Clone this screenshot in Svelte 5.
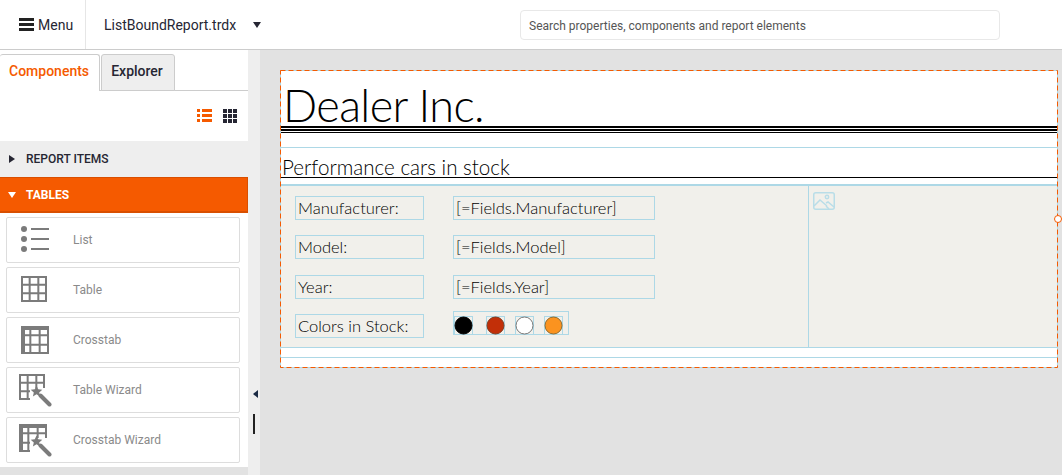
<script lang="ts">
	const items = ['List', 'Table', 'Crosstab', 'Table Wizard', 'Crosstab Wizard'];

	const fields = [
		{ label: 'Manufacturer:', value: '[=Fields.Manufacturer]' },
		{ label: 'Model:', value: '[=Fields.Model]' },
		{ label: 'Year:', value: '[=Fields.Year]' }
	];

	const swatches = [
		{ fill: '#000', stroke: '#000' },
		{ fill: '#c22f08', stroke: '#7a3a20' },
		{ fill: '#fff', stroke: '#777' },
		{ fill: '#fb931f', stroke: '#8a6a30' }
	];
</script>

{#snippet grid(x: number, y: number, w: number, h: number, heavy: boolean)}
	<g fill="none" stroke="#7b7b7b" stroke-width="2">
		<rect x={x + 1} y={y + 1} width={w - 2} height={h - 2} />
		<path d="M{x + w / 3} {y}V{y + h}M{x + (2 * w) / 3} {y}V{y + h}M{x} {y + h / 3}H{x + w}M{x} {y + (2 * h) / 3}H{x + w}" />
	</g>
	{#if heavy}
		<path d="M{x} {y}h{w}v4h-{w}zM{x} {y}h4v{h}h-4z" fill="#7b7b7b" />
	{/if}
{/snippet}

{#snippet wand()}
	<path d="M23 15h22v18H23z" fill="#fff" />
	<path d="M29.500 12.500l1.700 3.800 4.100.400-3.100 2.700.900 4-3.600-2.100-3.600 2.100.900-4-3.100-2.700 4.100-.400z" fill="#7b7b7b" />
	<path d="M33.500 22.500l9 9" stroke="#7b7b7b" stroke-width="4" stroke-linecap="round" />
{/snippet}

<div class="app">
	<header>
		<button class="menu">
			<svg width="15" height="13" viewBox="0 0 15 13"><path d="M0 0h15v3H0zM0 5h15v3H0zM0 10h15v3H0z" fill="#222" /></svg>
			Menu
		</button>
		<div class="file">
			<span>ListBoundReport.trdx</span>
			<i class="caret"></i>
		</div>
		<input class="search" placeholder="Search properties, components and report elements" />
	</header>

	<div class="main">
		<aside>
			<nav class="tabs">
				<div class="tab active">Components</div>
				<div class="tab">Explorer</div>
			</nav>
			<div class="views">
				<svg width="15" height="14" viewBox="0 0 15 14"><path d="M0 0h3v3H0zM5 0h10v3H5zM0 5h3v3H0zM5 5h10v3H5zM0 10h3v3H0zM5 10h10v3H5z" fill="#f55a00" /></svg>
				<svg width="14" height="14" viewBox="0 0 14 14"><path d="M0 0h4v4H0zM5 0h4v4H5zM10 0h4v4h-4zM0 5h4v4H0zM5 5h4v4H5zM10 5h4v4h-4zM0 10h4v4H0zM5 10h4v4H5zM10 10h4v4h-4z" fill="#262633" /></svg>
			</div>
			<div class="group"><i class="tri-right"></i>REPORT ITEMS</div>
			<div class="group open"><i class="tri-down"></i>TABLES</div>
			<ul>
				{#each items as name, i}
					<li>
						<svg class="icon" width="48" height="34" viewBox="0 0 48 34">
							{#if i === 0}
								<g fill="#7b7b7b">
									<circle cx="17" cy="6" r="3" /><circle cx="17" cy="16" r="3" /><circle cx="17" cy="26" r="3" />
									<path d="M24 5h18v2H24zM24 15h18v2H24zM24 25h18v2H24z" />
								</g>
							{:else if i === 1}
								{@render grid(14, 3, 26, 26, false)}
							{:else if i === 2}
								{@render grid(14, 3, 28, 28, true)}
							{:else if i === 3}
								{@render grid(12, 1, 26, 26, false)}
								{@render wand()}
							{:else}
								{@render grid(12, 1, 28, 28, true)}
								{@render wand()}
							{/if}
						</svg>
						<span>{name}</span>
					</li>
				{/each}
			</ul>
		</aside>

		<div class="gutter">
			<i class="tri-left"></i>
			<i class="bar"></i>
		</div>

		<main>
			<section class="report">
				<div class="band title-band">
					<h1>Dealer Inc.</h1>
				</div>
				<div class="rule"></div>
				<div class="band sub-band">
					<h2>Performance cars in stock</h2>
				</div>
				<div class="detail">
					<div class="form">
						{#each fields as f}
							<div class="row">
								<div class="box label">{f.label}</div>
								<div class="box value">{f.value}</div>
							</div>
						{/each}
						<div class="row last">
							<div class="box label">Colors in Stock:</div>
							<div class="swatches">
								{#each swatches as s}
									<div class="swatch">
										<svg width="19" height="19" viewBox="0 0 19 19"><circle cx="9.500" cy="9.500" r="8.500" fill={s.fill} stroke={s.stroke} /></svg>
									</div>
								{/each}
							</div>
						</div>
					</div>
					<div class="picture">
						<svg width="22" height="18" viewBox="0 0 22 18" fill="none" stroke="#b9dde8" stroke-width="1.500">
							<rect x=".75" y=".75" width="20.500" height="16.500" rx="2" />
							<circle cx="14" cy="5" r="1.700" />
							<path d="M1 14l6-6 7 6M13 11l2-1 6 5M16 17l-3-3" />
						</svg>
					</div>
				</div>
				<div class="foot"></div>
				<div class="foot short"></div>
				<svg class="dashes" width="778" height="298" viewBox="0 0 778 298">
					<rect x=".5" y=".5" width="777" height="297" />
				</svg>
				<i class="handle"></i>
			</section>
		</main>
	</div>
</div>

<style>
	:global(body) {
		margin: 0;
		overflow: hidden;
	}

	.app {
		width: 1062px;
		height: 475px;
		display: flex;
		flex-direction: column;
		font-family: Roboto, sans-serif;
		color: #262633;
		background: #e2e2e2;
	}

	header {
		height: 49px;
		flex: none;
		display: flex;
		align-items: center;
		background: #fff;
		border-bottom: 1px solid #ccc;
	}

	.menu {
		width: 86px;
		height: 49px;
		box-sizing: border-box;
		padding: 0 0 0 19px;
		display: flex;
		align-items: center;
		gap: 4px;
		border: 0;
		border-right: 1px solid #e6e6e6;
		background: none;
		font: 14px Roboto, sans-serif;
		color: #262633;
	}

	.file {
		width: 434px;
		box-sizing: border-box;
		padding-left: 18px;
		display: flex;
		align-items: center;
		font-size: 14px;
	}

	.caret {
		margin-left: 17px;
		border: 4px solid transparent;
		border-top: 6px solid #262633;
		border-bottom: 0;
	}

	.search {
		width: 480px;
		height: 30px;
		box-sizing: border-box;
		padding: 2px 8px 0;
		border: 1px solid #e8e8e8;
		border-radius: 4px;
		font: 12px Roboto, sans-serif;
		outline: none;
	}

	.search::placeholder {
		color: #555;
		opacity: 1;
	}

	.main {
		flex: 1;
		display: flex;
		min-height: 0;
	}

	aside {
		width: 248px;
		height: 417px;
		background: #fff;
	}

	.tabs {
		display: flex;
		height: 41px;
		box-sizing: border-box;
		padding-top: 4px;
		border-bottom: 1px solid #ccc;
	}

	.tab {
		height: 37px;
		box-sizing: border-box;
		width: 74px;
		margin-left: 1px;
		padding-right: 2px;
		border: 1px solid #ccc;
		border-radius: 3px 3px 0 0;
		background: #eee;
		font-size: 14px;
		font-weight: 500;
		line-height: 33px;
		text-align: center;
	}

	.tab.active {
		width: 100px;
		margin-left: 0;
		height: 37px;
		border-width: 1px 1px 0 0;
		background: #fff;
		color: #f55a00;
		text-align: left;
		padding: 0 0 0 9px;
	}

	.views {
		height: 50px;
		box-sizing: border-box;
		padding: 18px 11px 0 0;
		display: flex;
		justify-content: flex-end;
		gap: 11px;
	}

	.group {
		height: 36px;
		box-sizing: border-box;
		padding-left: 9px;
		display: flex;
		align-items: center;
		background: #eee;
		font-size: 12px;
		font-weight: 500;
	}

	.group.open {
		background: #f55a00;
		border: 1px solid #d94f00;
		border-width: 1px 1px 2px 0;
		color: #fff;
		font-weight: 700;
	}

	.tri-right {
		margin-right: 11px;
		border: 4px solid transparent;
		border-left: 6px solid #262633;
		border-right: 0;
	}

	.tri-down {
		margin-right: 10px;
		margin-left: -1px;
		border: 4px solid transparent;
		border-top: 6px solid #fff;
		border-bottom: 0;
	}

	ul {
		list-style: none;
		margin: 0;
		padding: 4px 8px 0 6px;
		display: flex;
		flex-direction: column;
		gap: 4px;
	}

	li {
		height: 46px;
		box-sizing: border-box;
		display: flex;
		align-items: center;
		border: 1px solid #ddd;
		border-radius: 2px;
		font-size: 12px;
		color: #8a8a8a;
	}

	.icon {
		margin: 0 18px 0 0;
		flex: none;
	}

	.gutter {
		width: 12px;
		height: 100%;
		flex: none;
		box-sizing: border-box;
		padding: 340px 0 0 5px;
		display: flex;
		flex-direction: column;
		background: #eee;
	}

	.tri-left {
		width: 0;
		border: 4px solid transparent;
		border-right: 5px solid #1a2a44;
		border-left: 0;
	}

	.bar {
		margin-top: 16px;
		width: 2px;
		height: 20px;
		background: #222;
	}

	main {
		flex: 1;
		padding: 20px 4px 0 20px;
		min-width: 0;
	}

	.report {
		position: relative;
		height: 298px;
		box-sizing: border-box;
		display: flex;
		flex-direction: column;
		border: 1px solid #add8e6;
		background: #fff;
		color: #000;
		font-family: Lato, sans-serif;
		font-weight: 300;
	}

	.dashes {
		position: absolute;
		left: -1px;
		top: -1px;
		pointer-events: none;
		fill: none;
		stroke: #f55a00;
		stroke-dasharray: 5 3;
	}

	h1,
	h2 {
		margin: 0;
		font-weight: 300;
		white-space: nowrap;
	}

	.title-band {
		flex: none;
		height: 55px;
		padding-left: 2px;
		border-bottom: 5px double #000;
	}

	h1 {
		font-size: 45px;
		line-height: 68px;
		height: 55px;
		letter-spacing: -0.6px;
	}

	.rule {
		flex: none;
		height: 14px;
		margin-top: 1px;
		border-top: 1px solid #000;
		border-bottom: 1px solid #add8e6;
	}

	.sub-band {
		flex: none;
		height: 29px;
		padding-left: 1px;
		border-bottom: 1px solid #000;
		margin-bottom: 6px;
	}

	h2 {
		font-size: 20.6px;
		line-height: 39px;
		height: 29px;
	}

	.detail {
		flex: none;
		height: 164px;
		display: flex;
		background: #f1f0eb;
		border-top: 2px solid #add8e6;
		border-bottom: 1px solid #add8e6;
		box-sizing: border-box;
	}

	.form {
		width: 528px;
		flex: none;
		box-sizing: border-box;
		padding: 10px 0 0 14px;
		display: flex;
		flex-direction: column;
		gap: 15.4px;
		border-right: 1px solid #add8e6;
	}

	.row {
		display: flex;
		gap: 29px;
		height: 24px;
	}

	.box {
		box-sizing: border-box;
		height: 24px;
		border: 1px solid #add8e6;
		padding-left: 2px;
		font-size: 16.5px;
		line-height: 23px;
		white-space: nowrap;
	}

	.label {
		width: 129px;
	}

	.value {
		width: 202px;
	}

	.swatches {
		box-sizing: border-box;
		width: 116px;
		height: 24px;
		margin-top: -3px;
		padding: 4px 0 0 0;
		display: flex;
		border: 1px solid #add8e6;
	}

	.swatch {
		box-sizing: border-box;
		width: 19px;
		height: 19px;
		margin-right: 10px;
		border: 1px solid #add8e6;
		line-height: 0;
	}

	.swatch:first-child {
		margin-right: 13px;
	}

	.swatch svg {
		margin: -1px 0 0 -1px;
	}

	.picture {
		padding: 6px 0 0 4px;
	}

	.foot {
		height: 9px;
		flex: none;
		border-bottom: 1px solid #add8e6;
	}

	.foot.short {
		border-bottom: 0;
	}

	.handle {
		position: absolute;
		right: -5px;
		top: 144px;
		width: 6px;
		height: 6px;
		border: 1px solid #f55a00;
		border-radius: 50%;
		background: #fff;
	}
</style>
